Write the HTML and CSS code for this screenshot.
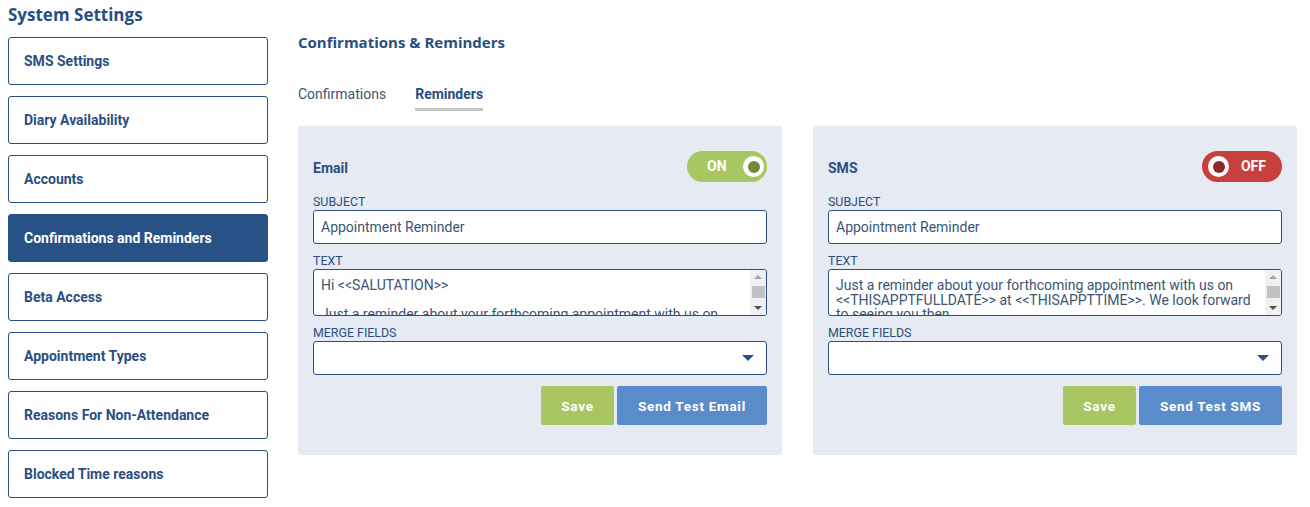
FILE: index.html
```html
<!DOCTYPE html>
<html>
<head>
<meta charset="utf-8">
<link rel="stylesheet" href="styles.css">
</head>
<body>
<div class="page">
  <aside class="sidebar">
    <h1 class="sidebar-title">System Settings</h1>
    <nav class="menu">
      <div class="menu-item">SMS Settings</div>
      <div class="menu-item">Diary Availability</div>
      <div class="menu-item">Accounts</div>
      <div class="menu-item active">Confirmations and Reminders</div>
      <div class="menu-item">Beta Access</div>
      <div class="menu-item">Appointment Types</div>
      <div class="menu-item">Reasons For Non-Attendance</div>
      <div class="menu-item">Blocked Time reasons</div>
    </nav>
  </aside>
  <main class="main">
    <h2 class="main-title">Confirmations &amp; Reminders</h2>
    <div class="tabs">
      <div class="tab">Confirmations</div>
      <div class="tab tab-active">Reminders</div>
    </div>
    <div class="panels">
      <section class="panel">
        <div class="panel-head">
          <div class="panel-title">Email</div>
          <div class="toggle toggle-on"><span class="toggle-text">ON</span><span class="knob"></span></div>
        </div>
        <label class="field-label">SUBJECT</label>
        <div class="input">Appointment Reminder</div>
        <label class="field-label">TEXT</label>
        <div class="textarea">
          <div class="textarea-content">Hi &lt;&lt;SALUTATION&gt;&gt;

Just a reminder about your forthcoming appointment with us on &lt;&lt;THISAPPTFULLDATE&gt;&gt; at &lt;&lt;THISAPPTTIME&gt;&gt;. We look forward to seeing you then.</div>
          <div class="scrollbar">
            <span class="sb-btn"><span class="arrow-up"></span></span>
            <span class="sb-thumb"></span>
            <span class="sb-track"></span>
            <span class="sb-btn"><span class="arrow-down"></span></span>
          </div>
        </div>
        <label class="field-label">MERGE FIELDS</label>
        <div class="select"><span class="caret"></span></div>
        <div class="actions">
          <button class="btn btn-save">Save</button>
          <button class="btn btn-test btn-wide-email">Send Test Email</button>
        </div>
      </section>
      <section class="panel">
        <div class="panel-head">
          <div class="panel-title">SMS</div>
          <div class="toggle toggle-off"><span class="knob"></span><span class="toggle-text">OFF</span></div>
        </div>
        <label class="field-label">SUBJECT</label>
        <div class="input">Appointment Reminder</div>
        <label class="field-label">TEXT</label>
        <div class="textarea">
          <div class="textarea-content">Just a reminder about your forthcoming appointment with us on &lt;&lt;THISAPPTFULLDATE&gt;&gt; at &lt;&lt;THISAPPTTIME&gt;&gt;. We look forward to seeing you then.</div>
          <div class="scrollbar">
            <span class="sb-btn"><span class="arrow-up"></span></span>
            <span class="sb-thumb"></span>
            <span class="sb-track"></span>
            <span class="sb-btn"><span class="arrow-down"></span></span>
          </div>
        </div>
        <label class="field-label">MERGE FIELDS</label>
        <div class="select"><span class="caret"></span></div>
        <div class="actions">
          <button class="btn btn-save">Save</button>
          <button class="btn btn-test btn-wide-sms">Send Test SMS</button>
        </div>
      </section>
    </div>
  </main>
</div>
</body>
</html>
```
FILE: styles.css
```css
* { box-sizing: border-box; }
html, body { margin: 0; padding: 0; background: #fff; }
body { font-family: Roboto, "Liberation Sans", sans-serif; color: #2a4f7f; }

.page {
  display: flex;
  padding: 0 0 0 8px;
}

.sidebar { width: 260px; flex: none; }
.sidebar-title {
  font-family: "Open Sans", "Noto Sans", sans-serif;
  font-weight: 700;
  font-size: 17px;
  color: #2a4f7f;
  margin: 3px 0 0 0;
  line-height: 24px;
  height: 34px;
}
.menu { display: flex; flex-direction: column; gap: 11px; }
.menu-item {
  height: 48px;
  border: 1px solid #2a5083;
  border-radius: 3px;
  padding: 0 15px;
  display: flex;
  align-items: center;
  font-size: 14px;
  font-weight: 700;
  color: #2a4f7f;
}
.menu-item.active { background: #285185; border-color: #285185; color: #fff; }

.main { margin-left: 30px; width: 999px; }
.main-title {
  font-family: "Open Sans", "Noto Sans", sans-serif;
  font-weight: 700;
  font-size: 15px;
  margin: 32px 0 0 0;
  line-height: 20px;
  color: #2a4f7f;
}
.tabs { display: flex; gap: 29px; margin-top: 33px; }
.tab {
  font-size: 14px;
  color: #3c5573;
  line-height: 18px;
  padding-bottom: 5px;
  border-bottom: 3px solid transparent;
}
.tab-active { font-weight: 700; color: #2a4f7f; border-bottom-color: #c6c6c6; }

.panels { display: flex; gap: 31px; margin-top: 15px; }
.panel {
  width: 484px;
  height: 329px;
  background: #e6eaf2;
  border-radius: 2px;
  padding: 25px 15px 0 15px;
  display: flex;
  flex-direction: column;
}
.panel-head {
  display: flex;
  justify-content: space-between;
  align-items: center;
  height: 31px;
  margin-bottom: 11px;
}
.panel-title { font-size: 14px; font-weight: 700; color: #2a4f7f; padding-top: 3px; }

.toggle {
  width: 80px;
  height: 31px;
  border-radius: 16px;
  display: flex;
  align-items: center;
  justify-content: space-between;
  color: #fff;
  font-weight: 700;
  font-size: 14px;
}
.toggle-on { background: #a8c763; padding: 0 3px 0 20px; }
.toggle-off { background: #c8403e; padding: 0 16px 0 6px; }
.toggle-text { line-height: 16px; padding-bottom: 2px; }
.knob {
  width: 21px;
  height: 21px;
  border-radius: 50%;
  background: #fff;
  display: flex;
  align-items: center;
  justify-content: center;
}
.knob::after {
  content: "";
  width: 12px;
  height: 12px;
  border-radius: 50%;
}
.toggle-on .knob::after { background: #76873f; }
.toggle-off .knob::after { background: #8a2a2b; }

.field-label {
  display: block;
  font-size: 12.4px;
  line-height: 14px;
  color: #2a4f7f;
  padding-top: 2px;
  margin-bottom: 1px;
}
.input {
  height: 34px;
  background: #fff;
  border: 1px solid #2a5083;
  border-radius: 3px;
  padding: 0 7px;
  display: flex;
  align-items: center;
  font-size: 14px;
  color: #3c5573;
  margin-bottom: 8px;
}
.textarea {
  display: flex;
  height: 47px;
  background: #fff;
  border: 1px solid #2a5083;
  border-radius: 3px;
  margin: 0 0 8px 0;
  overflow: hidden;
}
.textarea-content {
  flex: 1;
  padding: 8px 7px 0 7px;
  font-size: 14px;
  line-height: 14.5px;
  color: #3c5573;
  white-space: pre-wrap;
  overflow: hidden;
}
.scrollbar {
  width: 16px;
  flex: none;
  background: #f1f1f1;
  display: flex;
  flex-direction: column;
  align-items: center;
}
.sb-btn {
  height: 14px;
  width: 100%;
  display: flex;
  align-items: center;
  justify-content: center;
}
.sb-thumb {
  width: 13px;
  height: 12px;
  background: #c1c1c1;
  margin-top: 2px;
}
.sb-track { flex: 1; }
.arrow-up {
  width: 0; height: 0;
  border-left: 4px solid transparent;
  border-right: 4px solid transparent;
  border-bottom: 4px solid #a3a3a3;
}
.arrow-down {
  width: 0; height: 0;
  border-left: 4px solid transparent;
  border-right: 4px solid transparent;
  border-top: 4px solid #505050;
}
.select {
  height: 34px;
  background: #fff;
  border: 1px solid #2a5083;
  border-radius: 3px;
  position: relative;
  margin-bottom: 11px;
}
.caret {
  position: absolute;
  right: 12px;
  top: 13px;
  width: 0;
  height: 0;
  border-left: 6px solid transparent;
  border-right: 6px solid transparent;
  border-top: 6px solid #2a5083;
}
.actions { display: flex; justify-content: flex-end; gap: 3px; }
.btn {
  height: 39px;
  border: none;
  border-radius: 2px;
  color: #fff;
  font-family: Roboto, "Liberation Sans", sans-serif;
  font-weight: 700;
  font-size: 13.5px;
  letter-spacing: 0.7px;
  padding: 0;
}
.btn-save { width: 73px; background: #a8c763; }
.btn-test { background: #5a8bcb; }
.btn-wide-email { width: 150px; }
.btn-wide-sms { width: 143px; }
```
